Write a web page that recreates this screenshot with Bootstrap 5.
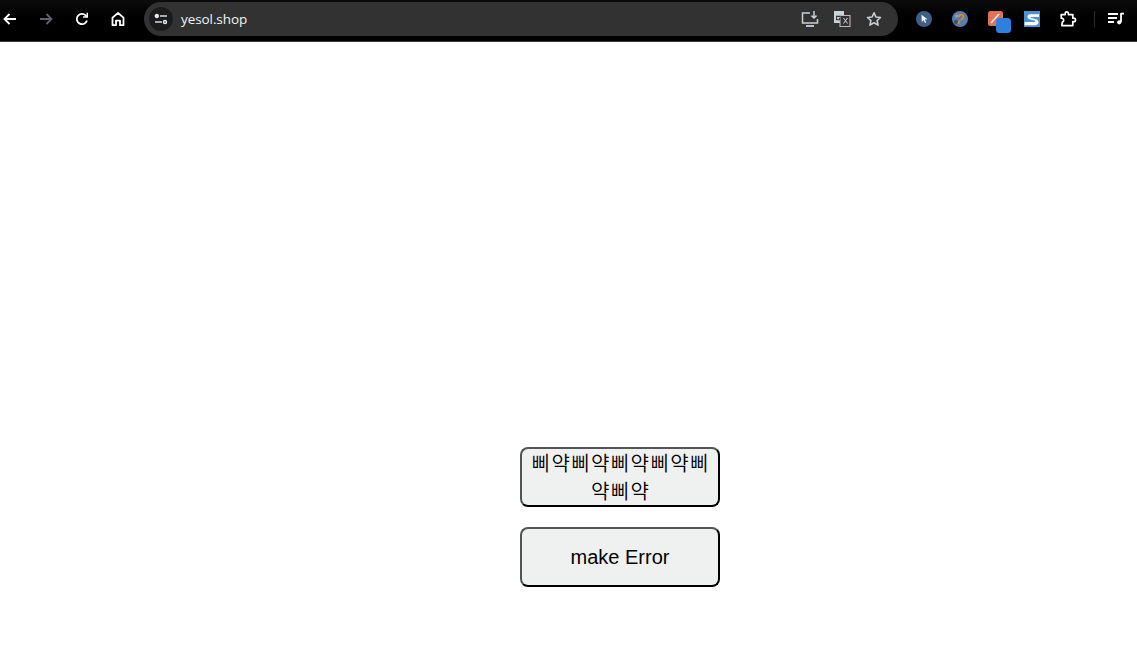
<!DOCTYPE html>
<html lang="ko">
<head>
<meta charset="utf-8">
<title>yesol.shop</title>
<link rel="stylesheet" href="https://cdn.jsdelivr.net/npm/bootstrap@5.3.0/dist/css/bootstrap.min.css">
<style>
html,body{height:100%;overflow:hidden;background:#fff}
.chrome-bar{box-sizing:content-box;height:39px;padding-top:2px;background:linear-gradient(#0c0c0c,#000 40%);border-bottom:1px solid #3a3a3a}
.tool-ic{flex:none;display:block}
.nav-group{width:144px;padding-left:1px}
.tool-slot{width:36px;height:34px;display:flex;align-items:center;justify-content:center}
.slot-back{width:18px}
.slot-fwd{margin-left:9px}
.slot-media{width:24px;margin-left:1px}
.omni{flex:none;width:754px;height:34px;background:#323232;border-radius:17px;padding:0 8px 0 5px}
.tune{width:24px;height:24px;border-radius:50%;background:#1c1c1c;margin-right:8px}
.omni-url{font:13.5px "Open Sans","Noto Sans",sans-serif;color:#f1f3f4;letter-spacing:-.08px}
.omni-slot{width:32px;height:34px;display:flex;align-items:center;justify-content:center}
.ext-group{padding-left:8px}
.ext-slot{width:36px;height:34px;display:flex;align-items:center;justify-content:center}
.sep-line{width:1px;height:16px;background:#2b2b2b;margin:0 8px}
.page-body{padding:405px 0 0 520px;gap:20px}
.beep-btn{width:200px;height:60px;padding:1px 6px;border:2px outset #000;border-radius:8px;background:#eff0f0;color:#000;font:20px/26px "Liberation Sans","Noto Sans CJK KR",sans-serif;text-align:center}
.beep-ko{display:block;font-weight:350;letter-spacing:1.4px;line-height:28px;margin-right:-1.4px}
</style>
</head>
<body class="m-0">
<div class="chrome-bar d-flex align-items-start">
  <div class="nav-group d-flex align-items-center">
    <div class="tool-slot slot-back">
      <svg class="tool-ic" width="16" height="16" viewBox="0 0 16 16" fill="none" stroke="#fff" stroke-width="1.8"><path d="M14 8H2.5M7.5 3 2.5 8l5 5"/></svg>
    </div>
    <div class="tool-slot slot-fwd">
      <svg class="tool-ic" width="16" height="16" viewBox="0 0 16 16" fill="none" stroke="#5d6470" stroke-width="1.8"><path d="M2 8h11.5M8.5 3l5 5-5 5"/></svg>
    </div>
    <div class="tool-slot">
      <svg class="tool-ic" width="16" height="16" viewBox="0 0 16 16" fill="none" stroke="#fff" stroke-width="1.8"><path d="M13 9.5A5.2 5.2 0 1 1 11.7 4.3L13 5.6"/><path d="M13.3 1.8v4.2H9.1" stroke-width="1.4"/></svg>
    </div>
    <div class="tool-slot">
      <svg class="tool-ic" width="16" height="16" viewBox="0 0 16 16" fill="none" stroke="#fff" stroke-width="1.8" stroke-linejoin="round"><path d="M2.5 14.2V6.6L8 2l5.5 4.6v7.6H10V9.6H6v4.6z"/></svg>
    </div>
  </div>
  <div class="omni d-flex align-items-center">
    <div class="tune d-flex align-items-center justify-content-center">
      <svg width="14" height="12" viewBox="0 0 14 12" fill="none" stroke="#e8eaed" stroke-width="1.4"><path d="M6 3h7"/><circle cx="2.8" cy="3" r="1.5" fill="#e8eaed"/><path d="M1 9h7"/><circle cx="11" cy="9" r="1.5"/></svg>
    </div>
    <span class="omni-url">yesol.shop</span>
    <div class="d-flex align-items-center ms-auto">
      <div class="omni-slot">
        <svg width="18" height="18" viewBox="0 0 18 18" fill="none" stroke="#c7ced6" stroke-width="1.5"><path d="M9 3H1.5v10h15V9"/><path d="M5 16h8" stroke-width="1.8"/><path d="M13 1v7M10.5 5.6 13 8l2.5-2.4"/></svg>
      </div>
      <div class="omni-slot">
        <svg width="18" height="18" viewBox="0 0 18 18" fill="none"><rect x="1" y="1" width="10" height="12" fill="#c9d3d8"/><path d="M7 5.5v11h10v-11z" fill="#323232" stroke="#c3b4bc" stroke-width="1.1"/><path d="M7.5 6.4H3.6v3.4h3V7.8" stroke="#333" stroke-width="1.1"/><path d="M10.5 8l4 5.5M14.5 8l-4 5.5" stroke="#d6d6d6" stroke-width="1"/></svg>
      </div>
      <div class="omni-slot">
        <svg width="16" height="16" viewBox="0 0 16 16" fill="none" stroke="#c9ccd0" stroke-width="1.6" stroke-linejoin="round"><path d="M8 1.8 9.9 6l4.6.5-3.4 3.1 1 4.5L8 11.8l-4.1 2.3 1-4.5L1.5 6.5 6.1 6z"/></svg>
      </div>
    </div>
  </div>
  <div class="ext-group d-flex align-items-center">
    <div class="ext-slot">
      <svg width="16" height="16" viewBox="0 0 16 16"><circle cx="8" cy="8" r="8" fill="#3f5f85"/><path d="M5.5 3.8 11.5 8.2l-2.6.4 1.3 2.8-1.2.5-1.3-2.7-1.9 1.8z" fill="#f1f3f5"/></svg>
    </div>
    <div class="ext-slot">
      <svg width="16" height="16" viewBox="0 0 16 16"><circle cx="8" cy="8" r="8" fill="#5a7ea8"/><circle cx="4.5" cy="5" r="1.6" fill="#8ea6c2"/><circle cx="4" cy="11" r="2" fill="#34506f"/><path d="M6.5 6.2A2.6 2.6 0 0 1 11.6 5.6c0 1.6-2 2-2.8 3.6M6.2 12.8c.6-1.2 1-2 1.6-3" fill="none" stroke="#e48a2a" stroke-width="1.7"/></svg>
    </div>
    <div class="ext-slot">
      <svg width="30" height="30" viewBox="0 0 30 30"><rect x="7" y="7" width="15" height="15" rx="2.5" fill="#df7257"/><path d="M10 19 18 10" stroke="#f6e5df" stroke-width="1.7"/><rect x="15" y="14" width="15" height="15" rx="3.5" fill="#2f7fe0"/></svg>
    </div>
    <div class="ext-slot">
      <svg width="16" height="16" viewBox="0 0 16 16"><rect width="16" height="16" fill="#4a90d2"/><path d="M15 3.3H6C3 3.3 2.3 7.3 5.6 8.2l5 1.3c1 .4.8 1.5-.4 1.5H.6v3.2H11c4 0 4.8-4.9 1-6L7.2 7c-.9-.3-.7-1 .2-1H15z" fill="#fff"/></svg>
    </div>
    <div class="ext-slot">
      <svg width="18" height="18" viewBox="0 0 18 18" fill="none" stroke="#fff" stroke-width="1.7" stroke-linejoin="round"><path d="M2.2 4.6h4V3.4a1.6 1.6 0 0 1 3.2 0v1.2h4.4v3.6h1a1.7 1.7 0 0 1 0 3.4h-1v4H2.8l.6-3.6a1.9 1.9 0 0 0 0-3.6l-1.2-.2z"/></svg>
    </div>
    <div class="sep-line"></div>
    <div class="tool-slot slot-media">
      <svg width="16" height="14" viewBox="0 0 16 14" fill="none" stroke="#fff" stroke-width="1.8"><path d="M0 2h10M0 6h9M0 10h6"/><path d="M13 1v9"/><path d="M13 1.6h3"/><circle cx="11.2" cy="10.3" r="2.1" fill="#fff" stroke="none"/></svg>
    </div>
  </div>
</div>
<main class="page-body d-flex flex-column align-items-start">
  <button type="button" class="beep-btn"><span class="beep-ko">삐약삐약삐약삐약삐약삐약</span></button>
  <button type="button" class="beep-btn">make Error</button>
</main>
</body>
</html>
